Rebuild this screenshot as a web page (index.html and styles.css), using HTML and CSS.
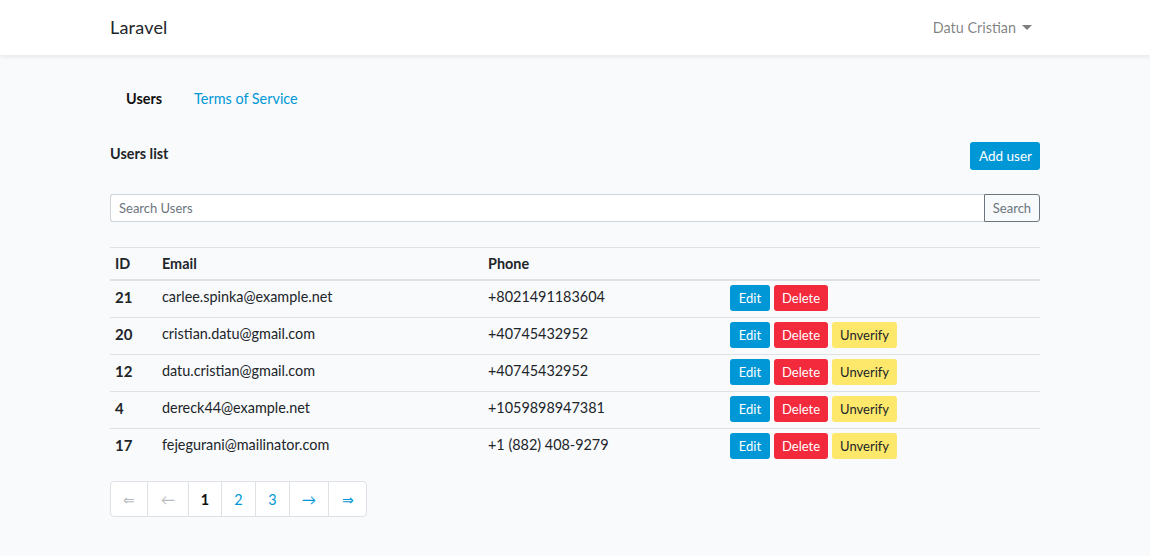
FILE: index.html
```html
<!DOCTYPE html>
<html>
<head>
<meta charset="utf-8">
<link rel="stylesheet" href="styles.css">
</head>
<body>
<nav class="navbar">
  <div class="container nav-inner">
    <span class="brand">Laravel</span>
    <span class="user">Datu Cristian <span class="caret"></span></span>
  </div>
</nav>
<main class="container main">
  <ul class="tabs">
    <li class="tab active">Users</li>
    <li class="tab">Terms of Service</li>
  </ul>
  <div class="head-row">
    <h5 class="title">Users list</h5>
    <button class="btn btn-blue btn-add">Add user</button>
  </div>
  <div class="search">
    <input class="search-input" type="text" placeholder="Search Users">
    <button class="search-btn">Search</button>
  </div>
  <table class="table">
    <colgroup><col class="c-id"><col class="c-email"><col class="c-phone"><col class="c-act"></colgroup>
    <thead>
      <tr><th>ID</th><th>Email</th><th>Phone</th><th></th></tr>
    </thead>
    <tbody>
      <tr><th>21</th><td>carlee.spinka@example.net</td><td>+8021491183604</td><td><div class="acts"><button class="btn btn-blue btn-edit">Edit</button><button class="btn btn-red">Delete</button></div></td></tr>
      <tr><th>20</th><td>cristian.datu@gmail.com</td><td>+40745432952</td><td><div class="acts"><button class="btn btn-blue btn-edit">Edit</button><button class="btn btn-red">Delete</button><button class="btn btn-yellow">Unverify</button></div></td></tr>
      <tr><th>12</th><td>datu.cristian@gmail.com</td><td>+40745432952</td><td><div class="acts"><button class="btn btn-blue btn-edit">Edit</button><button class="btn btn-red">Delete</button><button class="btn btn-yellow">Unverify</button></div></td></tr>
      <tr><th>4</th><td>dereck44@example.net</td><td>+1059898947381</td><td><div class="acts"><button class="btn btn-blue btn-edit">Edit</button><button class="btn btn-red">Delete</button><button class="btn btn-yellow">Unverify</button></div></td></tr>
      <tr><th>17</th><td>fejegurani@mailinator.com</td><td>+1 (882) 408-9279</td><td><div class="acts"><button class="btn btn-blue btn-edit">Edit</button><button class="btn btn-red">Delete</button><button class="btn btn-yellow">Unverify</button></div></td></tr>
    </tbody>
  </table>
  <ul class="pagination">
    <li class="pg disabled w37">&#8656;</li>
    <li class="pg disabled w41">&#8592;</li>
    <li class="pg current w33">1</li>
    <li class="pg w34">2</li>
    <li class="pg w34">3</li>
    <li class="pg w39">&#8594;</li>
    <li class="pg w38">&#8658;</li>
  </ul>
</main>
</body>
</html>
```

FILE: styles.css
```css
* { box-sizing: border-box; }
html, body { margin: 0; padding: 0; }
body {
  background: #f8fafc;
  font-family: "Lato", "Noto Sans", sans-serif;
  font-size: 14.4px;
  line-height: 1.6;
  color: #212529;
}
.container {
  width: 960px;
  margin: 0 auto;
  padding: 0 15px;
}
.navbar {
  background: #fff;
  height: 55px;
  box-shadow: 0 2px 4px rgba(0,0,0,0.075);
}
.nav-inner {
  height: 55px;
  display: flex;
  align-items: center;
  justify-content: space-between;
}
.brand {
  font-size: 18px;
  color: #212529;
  letter-spacing: 0.2px;
}
.user {
  color: rgba(0,0,0,0.5);
  font-size: 14.4px;
  padding-right: 8px;
  display: flex;
  align-items: center;
}
.caret {
  display: inline-block;
  margin-left: 6px;
  width: 0; height: 0;
  border-left: 5px solid transparent;
  border-right: 5px solid transparent;
  border-top: 5px solid rgba(0,0,0,0.5);
}
.main { padding-top: 24px; }
.tabs {
  list-style: none;
  margin: 0;
  padding: 0;
  display: flex;
}
.tab {
  padding: 8px 16px;
  color: #0097d6;
  line-height: 23px;
}
.tab.active { color: #111; font-weight: 700; }
.head-row {
  margin-top: 24px;
  display: flex;
  justify-content: space-between;
  align-items: flex-start;
  height: 28px;
}
.title {
  margin: 0;
  font-size: 14.4px;
  font-weight: 700;
  line-height: 23px;
}
.btn {
  border: 1px solid transparent;
  border-radius: 3px;
  font-family: inherit;
  font-size: 13px;
  line-height: 18px;
  padding: 3px 7px;
  cursor: pointer;
  white-space: nowrap;
}
.btn-add { height: 28px; padding: 4px 8px; font-size: 13.5px; width: 70px; }
.btn-blue { background: #0097d6; color: #fff; }
.btn-red { background: #f22a3c; color: #fff; }
.btn-yellow { background: #fde86c; color: #212529; }
.search {
  margin-top: 24px;
  display: flex;
  height: 28px;
}
.search-input {
  flex: 1;
  height: 28px;
  border: 1px solid #ced4da;
  border-right: none;
  border-radius: 3px 0 0 3px;
  background: #fff;
  font-family: inherit;
  font-size: 13px;
  padding: 0 8px;
  color: #495057;
}
.search-input::placeholder { color: #6c757d; }
.search-btn {
  width: 56px;
  height: 28px;
  border: 1px solid #6c757d;
  border-radius: 0 3px 3px 0;
  background: transparent;
  color: #6c757d;
  font-family: inherit;
  font-size: 13px;
  padding: 0;
}
.table {
  margin-top: 25px;
  width: 100%;
  border-collapse: collapse;
  table-layout: fixed;
}
.c-id { width: 47px; }
.c-email { width: 326px; }
.c-phone { width: 242px; }
.table th, .table td {
  text-align: left;
  padding: 4px 5px;
  border-top: 1px solid #dee2e6;
  vertical-align: top;
}
.table thead th {
  font-weight: 700;
  border-bottom: 2px solid #dee2e6;
  height: 32px;
  vertical-align: bottom;
}
.table tbody th { font-weight: 700; font-size: 15px; }
.table tbody tr { height: 37px; }
.table tbody tr:first-child th, .table tbody tr:first-child td { border-top: none; }
.acts { display: flex; gap: 4px; }
.acts .btn { height: 26px; padding: 3px 7px; font-size: 13px; line-height: 18px; }
.acts .btn-edit { width: 40px; }
.pagination {
  list-style: none;
  margin: 16px 0 0;
  padding: 0;
  display: flex;
}
.pg {
  height: 36px;
  display: flex;
  align-items: center;
  justify-content: center;
  background: #fff;
  border: 1px solid #dee2e6;
  margin-left: -1px;
  color: #0097d6;
  font-size: 14.4px;
}
.pg:first-child { margin-left: 0; border-radius: 4px 0 0 4px; }
.pg:last-child { border-radius: 0 4px 4px 0; }
.pg.disabled { color: #b8bcc0; }
.pg.current { color: #111; font-weight: 700; }
.w37 { width: 38px; }
.w41 { width: 42px; }
.w33 { width: 34px; }
.w34 { width: 35px; }
.w39 { width: 40px; }
.w38 { width: 39px; }
```
